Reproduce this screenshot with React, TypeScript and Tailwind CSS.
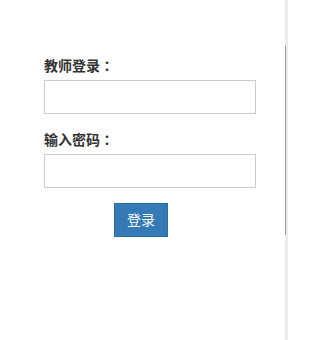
import React from 'react';

const Colon = () => (
  <span className="leading-none" style={{ fontFamily: '"Noto Sans CJK TC", sans-serif' }}>：</span>
);

const App = () => {
  return (
    <div
      className="flex w-[288px] h-[340px] bg-white text-[#333] text-[14px]"
      style={{ fontFamily: '"Liberation Sans", "Noto Sans CJK SC", sans-serif' }}
    >
      <div className="flex-1 pl-[44px] pt-[56px]">
        <form className="w-[212px]">
          <div className="mb-[16px]">
            <label className="block h-[20px] font-bold leading-[20px] mb-[4px]">
              教师登录<Colon />
            </label>
            <input
              type="text"
              className="block w-[212px] h-[34px] border border-[#ccc] bg-white px-3 outline-none"
            />
          </div>
          <div className="mb-[15px]">
            <label className="block h-[20px] font-bold leading-[20px] mb-[4px]">
              输入密码<Colon />
            </label>
            <input
              type="password"
              className="block w-[212px] h-[34px] border border-[#ccc] bg-white px-3 outline-none"
            />
          </div>
          <button
            type="button"
            className="ml-[70px] w-[54px] h-[34px] bg-[#337ab7] border border-[#2e6da4] text-white leading-[20px]"
          >
            登录
          </button>
        </form>
      </div>
      <div className="w-[3px] bg-[#ececec] pt-[46px]">
        <div className="h-[189px] border-l border-[#999]" />
      </div>
    </div>
  );
};

export default App;
